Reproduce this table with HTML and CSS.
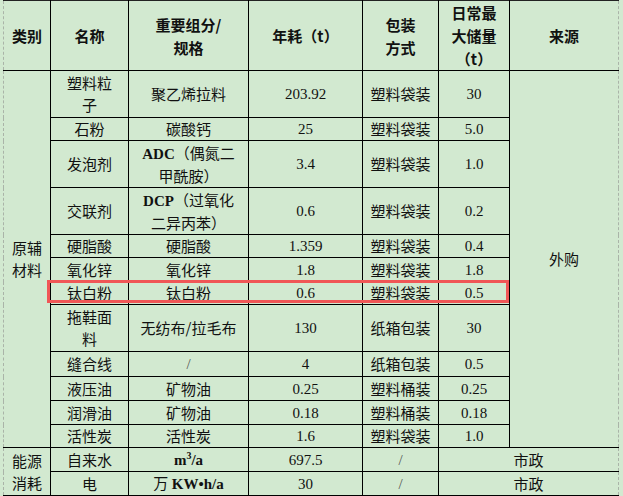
FILE: index.html
```html
<!DOCTYPE html>
<html lang="zh">
<head>
<meta charset="utf-8">
<link rel="stylesheet" href="styles.css">
</head>
<body>
<div class="page">
  <table class="tbl">
    <colgroup>
      <col class="c-cat"><col class="c-name"><col class="c-spec"><col class="c-use"><col class="c-pack"><col class="c-store"><col class="c-src">
    </colgroup>
    <thead>
      <tr class="r-head">
        <th>类别</th>
        <th>名称</th>
        <th>重要组分/<br>规格</th>
        <th>年耗（t）</th>
        <th>包装<br>方式</th>
        <th>日常最<br>大储量<br>（t）</th>
        <th class="last">来源</th>
      </tr>
    </thead>
    <tbody>
      <tr class="r47">
        <td rowspan="12" class="first">原辅<br>材料</td>
        <td>塑料粒<br>子</td>
        <td>聚乙烯拉料</td>
        <td class="num">203.92</td>
        <td>塑料袋装</td>
        <td class="num">30</td>
        <td rowspan="12" class="last src">外购</td>
      </tr>
      <tr class="r23">
        <td>石粉</td><td>碳酸钙</td><td class="num">25</td><td>塑料袋装</td><td class="num">5.0</td>
      </tr>
      <tr class="r47">
        <td>发泡剂</td><td><span class="lat">ADC</span>（偶氮二<br>甲酰胺）</td><td class="num">3.4</td><td>塑料袋装</td><td class="num">1.0</td>
      </tr>
      <tr class="r47">
        <td>交联剂</td><td><span class="lat">DCP</span>（过氧化<br>二异丙苯）</td><td class="num">0.6</td><td>塑料袋装</td><td class="num">0.2</td>
      </tr>
      <tr class="r23">
        <td>硬脂酸</td><td>硬脂酸</td><td class="num">1.359</td><td>塑料袋装</td><td class="num">0.4</td>
      </tr>
      <tr class="r24">
        <td>氧化锌</td><td>氧化锌</td><td class="num">1.8</td><td>塑料袋装</td><td class="num">1.8</td>
      </tr>
      <tr class="r22">
        <td>钛白粉</td><td>钛白粉</td><td class="num">0.6</td><td>塑料袋装</td><td class="num">0.5</td>
      </tr>
      <tr class="r47">
        <td>拖鞋面<br>料</td><td>无纺布/拉毛布</td><td class="num">130</td><td>纸箱包装</td><td class="num">30</td>
      </tr>
      <tr class="r25">
        <td>缝合线</td><td class="slash">/</td><td class="num">4</td><td>纸箱包装</td><td class="num">0.5</td>
      </tr>
      <tr class="r24">
        <td>液压油</td><td>矿物油</td><td class="num">0.25</td><td>塑料桶装</td><td class="num">0.25</td>
      </tr>
      <tr class="r24">
        <td>润滑油</td><td>矿物油</td><td class="num">0.18</td><td>塑料桶装</td><td class="num">0.18</td>
      </tr>
      <tr class="r23">
        <td>活性炭</td><td>活性炭</td><td class="num">1.6</td><td>塑料袋装</td><td class="num">1.0</td>
      </tr>
      <tr class="r24">
        <td rowspan="2" class="first">能源<br>消耗</td>
        <td>自来水</td><td><span class="lat">m<sup>3</sup>/a</span></td><td class="num">697.5</td><td class="slash">/</td><td colspan="2" class="last">市政</td>
      </tr>
      <tr class="r24 r-end">
        <td>电</td><td>万 <span class="lat">KW•h/a</span></td><td class="num">30</td><td class="slash">/</td><td colspan="2" class="last">市政</td>
      </tr>
    </tbody>
  </table>
  <div class="highlight"></div>
</div>
</body>
</html>
```

FILE: styles.css
```css
html, body {
  margin: 0;
  padding: 0;
  background: #d2e9d0;
}
body {
  width: 623px;
  height: 496px;
  overflow: hidden;
  font-family: "Noto Sans CJK SC", "Noto Sans", sans-serif;
  color: #111;
}
.page {
  position: relative;
  padding-left: 3px;
}
.tbl {
  border-collapse: collapse;
  table-layout: fixed;
  width: 615px;
  font-size: 15px;
  line-height: 22px;
}
.c-cat { width: 47px; }
.c-name { width: 78px; }
.c-spec { width: 120px; }
.c-use { width: 114px; }
.c-pack { width: 76px; }
.c-store { width: 71px; }
.c-src { width: 109px; }

.tbl th, .tbl td {
  border: 1px solid #000;
  padding: 0;
  text-align: center;
  vertical-align: middle;
  white-space: nowrap;
  overflow: hidden;
}
.tbl th {
  font-weight: bold;
  border-top: 1px solid #222;
}
.r-head th:first-child, .tbl td.first {
  border-left: 1px dashed #aab4a8;
}
.tbl .last {
  border-right: 1px dashed #aab4a8;
}
.r-head { height: 70px; }
.r-head th { line-height: 23px; }
.r47 { height: 47px; }
.r25 { height: 25px; }
.r24 { height: 24px; }
.r23 { height: 23px; }
.r22 { height: 22px; }
.r-end td { border-bottom: 2px solid #000; }
.tbl td.first { border-bottom: 2px solid #000; }
.tbl tbody tr:first-child td.first { border-bottom: 1px solid #000; }

.num {
  font-family: "Liberation Serif", "Times New Roman", serif;
}
.lat {
  font-family: "Liberation Serif", "Times New Roman", serif;
  font-weight: bold;
}
.lat sup {
  font-size: 10px;
  line-height: 0;
}
.slash {
  font-family: "Liberation Serif", serif;
  color: #555;
}
.src {
  padding-top: 0;
}
.highlight {
  position: absolute;
  left: 47px;
  top: 280px;
  width: 456px;
  height: 17px;
  border: 3px solid #f05656;
}
```
